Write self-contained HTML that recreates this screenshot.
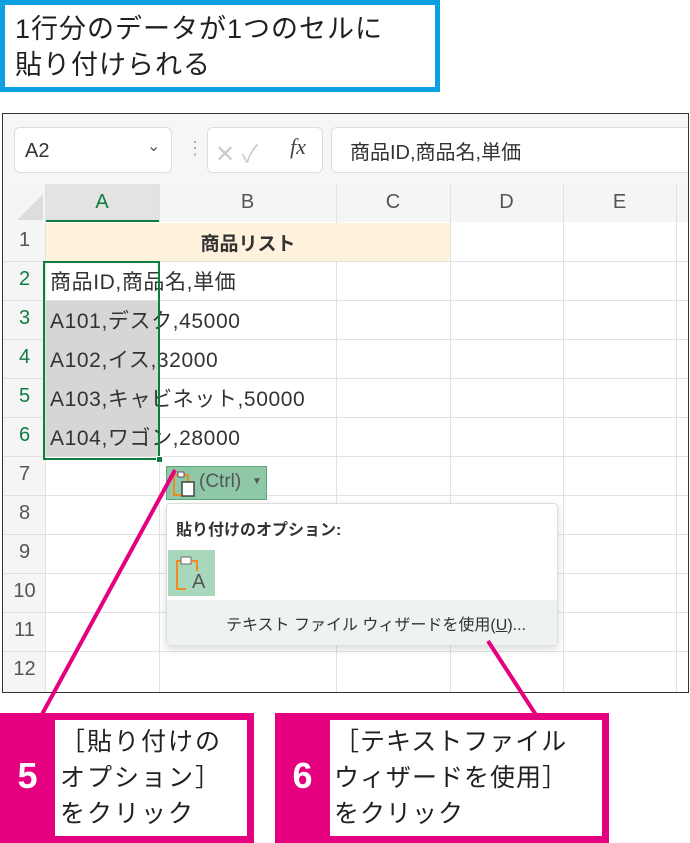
<!DOCTYPE html>
<html><head><meta charset="utf-8"><style>
*{margin:0;padding:0;box-sizing:border-box}
body{width:690px;height:843px;background:#fff;position:relative;overflow:hidden;font-family:"Liberation Sans","Noto Sans CJK JP",sans-serif;color:#222}
.a{position:absolute}
.top{left:0;top:0;width:440px;height:92px;border:5px solid #0ba0e2;font-size:27px;line-height:36px;padding:6px 0 0 10px;color:#231f20;letter-spacing:1px}
.frame{left:2px;top:113px;width:687px;height:580px;border:1.5px solid #333;background:#fff;overflow:hidden}
.box{border:1px solid #ddd;border-radius:6px;background:#fff}
.cell{font-size:21px;color:#333;white-space:nowrap;letter-spacing:0.6px}
.rh{width:43px;text-align:center;font-size:20px;color:#555}
.hl{height:1px;background:#e1e1e1}
.vl{width:1px;background:#e1e1e1}
.ch{font-size:20px;color:#555;text-align:center}
.mag{background:#e4007f}
.cal{font-size:25px;line-height:36px;color:#231f20;letter-spacing:2px}
</style></head><body>
<div class="a top">1行分のデータが1つのセルに<br>貼り付けられる</div>

<div class="a frame">
 <div class="a" style="left:0;top:0;width:687px;height:70px;background:#f6f6f6"></div>
 <div class="a box" style="left:11px;top:13px;width:158px;height:46px"></div>
 <div class="a" style="left:22px;top:26px;font-size:20px;color:#333">A2</div>
 <div class="a" style="left:144px;top:22px;font-size:16px;color:#555">&#8964;</div>
 <div class="a" style="left:183px;top:24px;font-size:18px;color:#aaa">⋮</div>
 <div class="a box" style="left:204px;top:13px;width:116px;height:46px"></div>
 <div class="a" style="left:212px;top:20px;font-size:24px;color:#ccc">✕ ✓</div>
 <div class="a" style="left:287px;top:20px;font-size:22px;color:#444;font-style:italic;font-family:'Liberation Serif',serif">fx</div>
 <div class="a box" style="left:328px;top:13px;width:370px;height:46px"></div>
 <div class="a" style="left:347px;top:22px;font-size:20px;color:#333">商品ID,商品名,単価</div>

 <div class="a" style="left:0;top:70px;width:687px;height:38px;background:#f5f5f5"></div>
 <div class="a" style="left:0;top:108px;width:42px;height:472px;background:#f5f5f5"></div>
 <div class="a" style="left:42px;top:70px;width:114px;height:38px;background:#e3e3e3;border-bottom:2px solid #107c41"></div>
 <svg class="a" style="left:12px;top:80px" width="28" height="26"><polygon points="28,0 28,26 2,26" fill="#ddd"/></svg>
 <div class="a ch" style="left:42px;top:77px;width:114px;color:#107c41">A</div>
 <div class="a ch" style="left:156px;top:77px;width:177px">B</div>
 <div class="a ch" style="left:333px;top:77px;width:114px">C</div>
 <div class="a ch" style="left:447px;top:77px;width:113px">D</div>
 <div class="a ch" style="left:560px;top:77px;width:113px">E</div>

 <div class="a vl" style="left:42px;top:70px;height:510px"></div>
 <div class="a vl" style="left:156px;top:70px;height:510px"></div>
 <div class="a vl" style="left:333px;top:70px;height:510px"></div>
 <div class="a vl" style="left:447px;top:70px;height:510px"></div>
 <div class="a vl" style="left:560px;top:70px;height:510px"></div>
 <div class="a vl" style="left:673px;top:70px;height:510px"></div>
 <div class="a hl" style="left:0;top:147px;width:687px"></div>
 <div class="a hl" style="left:0;top:186px;width:687px"></div>
 <div class="a hl" style="left:0;top:225px;width:687px"></div>
 <div class="a hl" style="left:0;top:264px;width:687px"></div>
 <div class="a hl" style="left:0;top:303px;width:687px"></div>
 <div class="a hl" style="left:0;top:342px;width:687px"></div>
 <div class="a hl" style="left:0;top:381px;width:687px"></div>
 <div class="a hl" style="left:0;top:420px;width:687px"></div>
 <div class="a hl" style="left:0;top:459px;width:687px"></div>
 <div class="a hl" style="left:0;top:498px;width:687px"></div>
 <div class="a hl" style="left:0;top:537px;width:687px"></div>

 <div class="a" style="left:43px;top:109px;width:404px;height:38px;background:#fff2dc"></div>
 <div class="a" style="left:43px;top:115px;width:404px;text-align:center;font-size:19px;font-weight:bold;color:#333">商品リスト</div>
 <div class="a" style="left:43px;top:187px;width:113px;height:155px;background:#d6d6d6"></div>

 <div class="a rh" style="top:115px">1</div>
 <div class="a rh" style="top:154px;color:#107c41">2</div>
 <div class="a rh" style="top:193px;color:#107c41">3</div>
 <div class="a rh" style="top:232px;color:#107c41">4</div>
 <div class="a rh" style="top:271px;color:#107c41">5</div>
 <div class="a rh" style="top:310px;color:#107c41">6</div>
 <div class="a rh" style="top:349px">7</div>
 <div class="a rh" style="top:388px">8</div>
 <div class="a rh" style="top:427px">9</div>
 <div class="a rh" style="top:466px">10</div>
 <div class="a rh" style="top:505px">11</div>
 <div class="a rh" style="top:544px">12</div>

 <div class="a cell" style="left:47px;top:152px">商品ID,商品名,単価</div>
 <div class="a cell" style="left:47px;top:191px">A101,デスク,45000</div>
 <div class="a cell" style="left:47px;top:230px">A102,イス,32000</div>
 <div class="a cell" style="left:47px;top:269px">A103,キャビネット,50000</div>
 <div class="a cell" style="left:47px;top:308px">A104,ワゴン,28000</div>

 <div class="a" style="left:40px;top:147px;width:117px;height:199px;border:2.5px solid #107c41"></div>
 <div class="a" style="left:153px;top:342px;width:7px;height:7px;background:#107c41;border:1px solid #fff"></div>

 <div class="a" style="left:163px;top:352px;width:101px;height:34px;background:#8fc8a6;border:1px solid #5aa77a"></div>
 <svg class="a" style="left:169px;top:356px" width="26" height="28"><rect x="2" y="5" width="14" height="20" fill="none" stroke="#f08a24" stroke-width="2"/><rect x="6" y="2" width="6" height="5" fill="#fff" stroke="#555"/><rect x="10" y="12" width="12" height="14" fill="#fff" stroke="#444" stroke-width="1.5"/></svg>
 <div class="a" style="left:196px;top:357px;font-size:19px;color:#555">(Ctrl)</div>
 <div class="a" style="left:249px;top:362px;font-size:10px;color:#555">▼</div>

 <div class="a" style="left:163px;top:389px;width:392px;height:143px;background:#fff;border:1px solid #ddd;border-radius:4px;box-shadow:0 3px 8px rgba(0,0,0,.15)"></div>
 <div class="a" style="left:173px;top:402px;font-size:16px;font-weight:bold;color:#333">貼り付けのオプション:</div>
 <div class="a" style="left:165px;top:436px;width:47px;height:46px;background:#a9d7bc"></div>
 <svg class="a" style="left:169px;top:441px" width="40" height="40"><path d="M16 6 H5 V34 H14" fill="none" stroke="#f08a24" stroke-width="2"/><rect x="9" y="2" width="10" height="7" fill="#fff" stroke="#666"/><path d="M19 6 H25 V16" fill="none" stroke="#f08a24" stroke-width="2"/></svg>
 <div class="a" style="left:189px;top:457px;font-size:20px;color:#555">A</div>
 <div class="a" style="left:164px;top:486px;width:390px;height:45px;background:#eef3f1"></div>
 <div class="a" style="left:223px;top:497px;font-size:16px;color:#333">テキスト ファイル ウィザードを使用(<u>U</u>)...</div>
</div>

<svg class="a" style="left:0;top:0" width="690" height="843"><line x1="175" y1="470" x2="40" y2="718" stroke="#e4007f" stroke-width="4"/><line x1="488" y1="641" x2="538" y2="718" stroke="#e4007f" stroke-width="4"/></svg>

<div class="a mag" style="left:0;top:713px;width:254px;height:130px"></div>
<div class="a" style="left:55px;top:720px;width:192px;height:116px;background:#fff"></div>
<div class="a" style="left:0;top:755px;width:55px;text-align:center;color:#fff;font-size:36px;font-weight:bold">5</div>
<div class="a cal" style="left:60px;top:724px">［貼り付けの<br>オプション］<br>をクリック</div>

<div class="a mag" style="left:275px;top:713px;width:334px;height:130px"></div>
<div class="a" style="left:330px;top:720px;width:272px;height:116px;background:#fff"></div>
<div class="a" style="left:275px;top:755px;width:55px;text-align:center;color:#fff;font-size:36px;font-weight:bold">6</div>
<div class="a cal" style="left:334px;top:724px;letter-spacing:1px">［テキストファイル<br>ウィザードを使用］<br>をクリック</div>
</body></html>
